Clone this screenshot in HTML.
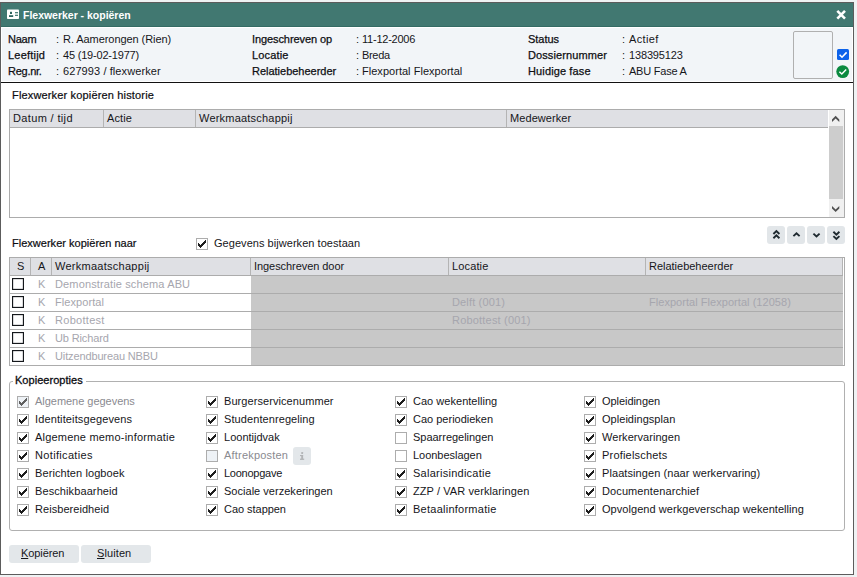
<!DOCTYPE html>
<html><head><meta charset="utf-8"><style>
html,body{margin:0;padding:0;}
body{width:857px;height:577px;position:relative;overflow:hidden;background:#eff2f3;font-family:"Liberation Sans", sans-serif;}
body>div,body>svg{position:absolute;}
.t{white-space:nowrap;}
u{text-decoration:underline;text-underline-offset:1px;}
</style></head><body>
<div style="left:0px;top:2px;width:854px;height:573px;border:1px solid #5c5c5c;box-sizing:border-box;background:#fff"></div>
<div style="left:1px;top:3px;width:852px;height:23px;background:#417871"></div>
<div style="left:1px;top:26px;width:852px;height:1px;background:#346b64"></div>
<svg style="position:absolute;left:7px;top:9px" width="13" height="11" viewBox="0 0 13 11"><rect x="0" y="0.6" width="12" height="9.5" rx="0.8" fill="#fff"/><rect x="3" y="2.8" width="2" height="2.2" fill="#2f665f"/><rect x="2" y="6.2" width="4.2" height="1.8" fill="#2f665f"/><rect x="8" y="3" width="3" height="1" fill="#4e827b"/><rect x="8" y="4" width="3" height="2" fill="#c5d6d3"/><rect x="8" y="6" width="3" height="1" fill="#4e827b"/></svg>
<div class="t" style="left:23px;top:9px;font-size:10.5px;line-height:12px;color:#fff;font-weight:bold;letter-spacing:-0.015px;">Flexwerker - kopiëren</div>
<svg style="position:absolute;left:835px;top:9px" width="13" height="12" viewBox="0 0 13 12"><path d="M2.3 1.9 L10.0 9.6 M10.0 1.9 L2.3 9.6" stroke="#fff" stroke-width="2.6" stroke-linecap="butt"/></svg>
<div style="left:1px;top:27px;width:852px;height:55px;background:#fff"></div>
<div style="left:2px;top:28px;width:850px;height:53px;background:#f2f5f8"></div>
<div style="left:1px;top:82px;width:852px;height:1px;background:#111"></div>
<div class="t" style="left:8px;top:33px;font-size:11px;line-height:13px;color:#0e0e12;-webkit-text-stroke:0.25px #0e0e12;letter-spacing:-0.233px;">Naam</div>
<div class="t" style="left:56px;top:33px;font-size:11px;line-height:13px;color:#16161a;">:</div>
<div class="t" style="left:63px;top:33px;font-size:11px;line-height:13px;color:#16161a;letter-spacing:-0.063px;">R. Aamerongen (Rien)</div>
<div class="t" style="left:8px;top:49px;font-size:11px;line-height:13px;color:#0e0e12;-webkit-text-stroke:0.25px #0e0e12;letter-spacing:0.214px;">Leeftijd</div>
<div class="t" style="left:56px;top:49px;font-size:11px;line-height:13px;color:#16161a;">:</div>
<div class="t" style="left:63px;top:49px;font-size:11px;line-height:13px;color:#16161a;letter-spacing:-0.193px;">45 (19-02-1977)</div>
<div class="t" style="left:8px;top:65px;font-size:11px;line-height:13px;color:#0e0e12;-webkit-text-stroke:0.25px #0e0e12;letter-spacing:-0.267px;">Reg.nr.</div>
<div class="t" style="left:56px;top:65px;font-size:11px;line-height:13px;color:#16161a;">:</div>
<div class="t" style="left:63px;top:65px;font-size:11px;line-height:13px;color:#16161a;letter-spacing:0.089px;">627993 / flexwerker</div>
<div class="t" style="left:252px;top:33px;font-size:11px;line-height:13px;color:#0e0e12;-webkit-text-stroke:0.25px #0e0e12;letter-spacing:-0.093px;">Ingeschreven op</div>
<div class="t" style="left:356px;top:33px;font-size:11px;line-height:13px;color:#16161a;">:</div>
<div class="t" style="left:362px;top:33px;font-size:11px;line-height:13px;color:#16161a;letter-spacing:-0.233px;">11-12-2006</div>
<div class="t" style="left:252px;top:49px;font-size:11px;line-height:13px;color:#0e0e12;-webkit-text-stroke:0.25px #0e0e12;letter-spacing:0.167px;">Locatie</div>
<div class="t" style="left:356px;top:49px;font-size:11px;line-height:13px;color:#16161a;">:</div>
<div class="t" style="left:362px;top:49px;font-size:11px;line-height:13px;color:#16161a;letter-spacing:-0.325px;">Breda</div>
<div class="t" style="left:252px;top:65px;font-size:11px;line-height:13px;color:#0e0e12;-webkit-text-stroke:0.25px #0e0e12;letter-spacing:-0.013px;">Relatiebeheerder</div>
<div class="t" style="left:356px;top:65px;font-size:11px;line-height:13px;color:#16161a;">:</div>
<div class="t" style="left:362px;top:65px;font-size:11px;line-height:13px;color:#16161a;letter-spacing:0.030px;">Flexportal Flexportal</div>
<div class="t" style="left:528px;top:33px;font-size:11px;line-height:13px;color:#0e0e12;-webkit-text-stroke:0.25px #0e0e12;letter-spacing:-0.020px;">Status</div>
<div class="t" style="left:622px;top:33px;font-size:11px;line-height:13px;color:#16161a;">:</div>
<div class="t" style="left:629px;top:33px;font-size:11px;line-height:13px;color:#16161a;letter-spacing:0.340px;">Actief</div>
<div class="t" style="left:528px;top:49px;font-size:11px;line-height:13px;color:#0e0e12;-webkit-text-stroke:0.25px #0e0e12;letter-spacing:0.100px;">Dossiernummer</div>
<div class="t" style="left:622px;top:49px;font-size:11px;line-height:13px;color:#16161a;">:</div>
<div class="t" style="left:629px;top:49px;font-size:11px;line-height:13px;color:#16161a;letter-spacing:-0.150px;">138395123</div>
<div class="t" style="left:528px;top:65px;font-size:11px;line-height:13px;color:#0e0e12;-webkit-text-stroke:0.25px #0e0e12;letter-spacing:0.127px;">Huidige fase</div>
<div class="t" style="left:622px;top:65px;font-size:11px;line-height:13px;color:#16161a;">:</div>
<div class="t" style="left:629px;top:65px;font-size:11px;line-height:13px;color:#16161a;letter-spacing:-0.222px;">ABU Fase A</div>
<div style="left:793px;top:31px;width:40px;height:48px;border:1px solid #b0b0b0;border-radius:2px;box-sizing:border-box"></div>
<svg style="position:absolute;left:837px;top:49px" width="12" height="12" viewBox="0 0 12 12"><rect x="0" y="0" width="12" height="11" rx="1.5" fill="#0c62ea"/><path d="M2.6 5.8 L5 8.2 L9.6 3.4" stroke="#fff" stroke-width="1.6" fill="none"/></svg>
<svg style="position:absolute;left:836px;top:65px" width="14" height="14" viewBox="0 0 14 14"><circle cx="6.7" cy="6.6" r="6.4" fill="#0b8a40"/><path d="M3.4 6.8 L5.8 9.1 L10.2 4.6" stroke="#fff" stroke-width="1.45" fill="none"/></svg>
<div class="t" style="left:12px;top:89px;font-size:11px;line-height:13px;color:#0c0c10;-webkit-text-stroke:0.2px #0c0c10;letter-spacing:0.159px;">Flexwerker kopiëren historie</div>
<div style="left:9px;top:109px;width:836px;height:109px;border:1px solid #acacac;box-sizing:border-box"></div>
<div style="left:10px;top:110px;width:818px;height:17px;background:#dfe0e4"></div>
<div style="left:10px;top:127px;width:818px;height:1px;background:#acacac"></div>
<div style="left:103px;top:110px;width:1px;height:17px;background:#b4b4b4"></div>
<div style="left:195px;top:110px;width:1px;height:17px;background:#b4b4b4"></div>
<div style="left:506px;top:110px;width:1px;height:17px;background:#b4b4b4"></div>
<div class="t" style="left:13px;top:112px;font-size:11px;line-height:13px;color:#16161a;letter-spacing:0.355px;">Datum / tijd</div>
<div class="t" style="left:107px;top:112px;font-size:11px;line-height:13px;color:#16161a;letter-spacing:0.125px;">Actie</div>
<div class="t" style="left:199px;top:112px;font-size:11px;line-height:13px;color:#16161a;letter-spacing:0.207px;">Werkmaatschappij</div>
<div class="t" style="left:510px;top:112px;font-size:11px;line-height:13px;color:#16161a;letter-spacing:0.078px;">Medewerker</div>
<div style="left:829px;top:110px;width:15px;height:107px;background:#f0f0f0"></div>
<div style="left:829px;top:126px;width:14px;height:73px;background:#cdcdcd"></div>
<svg style="position:absolute;left:829px;top:110px" width="15" height="17" viewBox="0 0 15 17"><path d="M3 9.5 L6.65 5.8 L10.3 9.5 L10.3 12 L6.65 8.4 L3 12 Z" fill="#505050"/></svg>
<svg style="position:absolute;left:829px;top:199px" width="15" height="18" viewBox="0 0 15 18"><path d="M3 6.9 L6.65 10.5 L10.3 6.9 L10.3 9.4 L6.65 13 L3 9.4 Z" fill="#505050"/></svg>
<div class="t" style="left:12px;top:237px;font-size:11px;line-height:13px;color:#0c0c10;-webkit-text-stroke:0.2px #0c0c10;letter-spacing:0.017px;">Flexwerker kopiëren naar</div>
<svg style="position:absolute;left:196px;top:238px" width="12" height="12" viewBox="0 0 12 12"><rect x="0.5" y="0.5" width="11" height="11" fill="#fff" stroke="#adadad" stroke-width="1"/><path d="M2 4.8 L4.5 7.3 L10 1.8 L10 4.7 L4.5 10.2 L2 7.7 Z" fill="#1e1e1e" shape-rendering="crispEdges"/></svg>
<div class="t" style="left:214px;top:237px;font-size:11px;line-height:13px;color:#16161a;letter-spacing:0.046px;">Gegevens bijwerken toestaan</div>
<svg style="position:absolute;left:767px;top:226px" width="18" height="18" viewBox="0 0 18 18"><rect x="0" y="0" width="18" height="18" rx="3" fill="#e2e6e9"/><path d="M6.4 8 L9.4 5.1 L12.4 8 M6.4 12.3 L9.4 9.4 L12.4 12.3" stroke="#1f2a30" stroke-width="1.9" fill="none"/></svg>
<svg style="position:absolute;left:787px;top:226px" width="18" height="18" viewBox="0 0 18 18"><rect x="0" y="0" width="18" height="18" rx="3" fill="#e2e6e9"/><path d="M6.4 10.1 L9.5 7.2 L12.6 10.1" stroke="#1f2a30" stroke-width="1.9" fill="none"/></svg>
<svg style="position:absolute;left:807px;top:226px" width="18" height="18" viewBox="0 0 18 18"><rect x="0" y="0" width="18" height="18" rx="3" fill="#e2e6e9"/><path d="M6.4 7.6 L9.5 10.5 L12.6 7.6" stroke="#1f2a30" stroke-width="1.9" fill="none"/></svg>
<svg style="position:absolute;left:827px;top:226px" width="18" height="18" viewBox="0 0 18 18"><rect x="0" y="0" width="18" height="18" rx="3" fill="#e2e6e9"/><path d="M6.4 5.8 L9.4 8.7 L12.4 5.8 M6.4 10.1 L9.4 13 L12.4 10.1" stroke="#1f2a30" stroke-width="1.9" fill="none"/></svg>
<div style="left:9px;top:257px;width:836px;height:109px;border:1px solid #acacac;box-sizing:border-box"></div>
<div style="left:10px;top:258px;width:832px;height:17px;background:#dfe0e4"></div>
<div style="left:10px;top:275px;width:833px;height:1px;background:#acacac"></div>
<div style="left:10px;top:293px;width:833px;height:1px;background:#acacac"></div>
<div style="left:10px;top:311px;width:833px;height:1px;background:#acacac"></div>
<div style="left:10px;top:329px;width:833px;height:1px;background:#acacac"></div>
<div style="left:10px;top:347px;width:833px;height:1px;background:#acacac"></div>
<div style="left:30px;top:258px;width:1px;height:17px;background:#b4b4b4"></div>
<div style="left:51px;top:258px;width:1px;height:17px;background:#b4b4b4"></div>
<div style="left:250px;top:258px;width:1px;height:17px;background:#b4b4b4"></div>
<div style="left:448px;top:258px;width:1px;height:17px;background:#b4b4b4"></div>
<div style="left:645px;top:258px;width:1px;height:17px;background:#b4b4b4"></div>
<div style="left:842px;top:258px;width:1px;height:17px;background:#b4b4b4"></div>
<div style="left:251px;top:276px;width:592px;height:17px;background:#c8c8c8"></div>
<div style="left:251px;top:294px;width:592px;height:17px;background:#c8c8c8"></div>
<div style="left:251px;top:312px;width:592px;height:17px;background:#c8c8c8"></div>
<div style="left:251px;top:330px;width:592px;height:17px;background:#c8c8c8"></div>
<div style="left:251px;top:348px;width:592px;height:17px;background:#c8c8c8"></div>
<div class="t" style="left:17px;top:260px;font-size:11px;line-height:13px;color:#16161a;">S</div>
<div class="t" style="left:38px;top:260px;font-size:11px;line-height:13px;color:#16161a;">A</div>
<div class="t" style="left:55px;top:260px;font-size:11px;line-height:13px;color:#16161a;letter-spacing:0.267px;">Werkmaatschappij</div>
<div class="t" style="left:254px;top:260px;font-size:11px;line-height:13px;color:#16161a;letter-spacing:-0.062px;">Ingeschreven door</div>
<div class="t" style="left:452px;top:260px;font-size:11px;line-height:13px;color:#16161a;letter-spacing:0.133px;">Locatie</div>
<div class="t" style="left:649px;top:260px;font-size:11px;line-height:13px;color:#16161a;letter-spacing:-0.013px;">Relatiebeheerder</div>
<svg style="position:absolute;left:12px;top:278px" width="12" height="12" viewBox="0 0 12 12"><rect x="0.575" y="0.575" width="10.85" height="10.85" fill="#fff" stroke="#15181c" stroke-width="1.15"/></svg>
<div class="t" style="left:38px;top:278px;font-size:11px;line-height:13px;color:#a6a6ae;">K</div>
<div class="t" style="left:55px;top:278px;font-size:11px;line-height:13px;color:#a6a6ae;letter-spacing:0.136px;">Demonstratie schema ABU</div>
<svg style="position:absolute;left:12px;top:296px" width="12" height="12" viewBox="0 0 12 12"><rect x="0.575" y="0.575" width="10.85" height="10.85" fill="#fff" stroke="#15181c" stroke-width="1.15"/></svg>
<div class="t" style="left:38px;top:296px;font-size:11px;line-height:13px;color:#a6a6ae;">K</div>
<div class="t" style="left:55px;top:296px;font-size:11px;line-height:13px;color:#a6a6ae;letter-spacing:0.067px;">Flexportal</div>
<svg style="position:absolute;left:12px;top:314px" width="12" height="12" viewBox="0 0 12 12"><rect x="0.575" y="0.575" width="10.85" height="10.85" fill="#fff" stroke="#15181c" stroke-width="1.15"/></svg>
<div class="t" style="left:38px;top:314px;font-size:11px;line-height:13px;color:#a6a6ae;">K</div>
<div class="t" style="left:55px;top:314px;font-size:11px;line-height:13px;color:#a6a6ae;letter-spacing:0.287px;">Robottest</div>
<svg style="position:absolute;left:12px;top:332px" width="12" height="12" viewBox="0 0 12 12"><rect x="0.575" y="0.575" width="10.85" height="10.85" fill="#fff" stroke="#15181c" stroke-width="1.15"/></svg>
<div class="t" style="left:38px;top:332px;font-size:11px;line-height:13px;color:#a6a6ae;">K</div>
<div class="t" style="left:55px;top:332px;font-size:11px;line-height:13px;color:#a6a6ae;letter-spacing:-0.133px;">Ub Richard</div>
<svg style="position:absolute;left:12px;top:350px" width="12" height="12" viewBox="0 0 12 12"><rect x="0.575" y="0.575" width="10.85" height="10.85" fill="#fff" stroke="#15181c" stroke-width="1.15"/></svg>
<div class="t" style="left:38px;top:350px;font-size:11px;line-height:13px;color:#a6a6ae;">K</div>
<div class="t" style="left:55px;top:350px;font-size:11px;line-height:13px;color:#a6a6ae;letter-spacing:-0.129px;">Uitzendbureau NBBU</div>
<div class="t" style="left:452px;top:296px;font-size:11px;line-height:13px;color:#a6a6ae;letter-spacing:0.150px;">Delft (001)</div>
<div class="t" style="left:649px;top:296px;font-size:11px;line-height:13px;color:#a6a6ae;letter-spacing:0.043px;">Flexportal Flexportal (12058)</div>
<div class="t" style="left:452px;top:314px;font-size:11px;line-height:13px;color:#a6a6ae;letter-spacing:0.193px;">Robottest (001)</div>
<div style="left:9px;top:381px;width:836px;height:150px;border:1px solid #b0b0b0;border-radius:3px;box-sizing:border-box"></div>
<div style="left:13px;top:376px;width:73px;height:8px;background:#fff"></div>
<div class="t" style="left:15px;top:374px;font-size:11px;line-height:13px;color:#0c0c10;-webkit-text-stroke:0.3px #0c0c10;letter-spacing:0.033px;">Kopieeropties</div>
<svg style="position:absolute;left:17px;top:396px" width="12" height="12" viewBox="0 0 12 12"><rect x="0.5" y="0.5" width="11" height="11" fill="#eef2f6" stroke="#adadad" stroke-width="1"/><path d="M2 4.8 L4.5 7.3 L10 1.8 L10 4.7 L4.5 10.2 L2 7.7 Z" fill="#606060" shape-rendering="crispEdges"/></svg>
<div class="t" style="left:35px;top:395px;font-size:11px;line-height:13px;color:#8a8a90;letter-spacing:-0.031px;">Algemene gegevens</div>
<svg style="position:absolute;left:17px;top:414px" width="12" height="12" viewBox="0 0 12 12"><rect x="0.5" y="0.5" width="11" height="11" fill="#fff" stroke="#adadad" stroke-width="1"/><path d="M2 4.8 L4.5 7.3 L10 1.8 L10 4.7 L4.5 10.2 L2 7.7 Z" fill="#1e1e1e" shape-rendering="crispEdges"/></svg>
<div class="t" style="left:35px;top:413px;font-size:11px;line-height:13px;color:#16161a;letter-spacing:0.128px;">Identiteitsgegevens</div>
<svg style="position:absolute;left:17px;top:432px" width="12" height="12" viewBox="0 0 12 12"><rect x="0.5" y="0.5" width="11" height="11" fill="#fff" stroke="#adadad" stroke-width="1"/><path d="M2 4.8 L4.5 7.3 L10 1.8 L10 4.7 L4.5 10.2 L2 7.7 Z" fill="#1e1e1e" shape-rendering="crispEdges"/></svg>
<div class="t" style="left:35px;top:431px;font-size:11px;line-height:13px;color:#16161a;letter-spacing:0.204px;">Algemene memo-informatie</div>
<svg style="position:absolute;left:17px;top:450px" width="12" height="12" viewBox="0 0 12 12"><rect x="0.5" y="0.5" width="11" height="11" fill="#fff" stroke="#adadad" stroke-width="1"/><path d="M2 4.8 L4.5 7.3 L10 1.8 L10 4.7 L4.5 10.2 L2 7.7 Z" fill="#1e1e1e" shape-rendering="crispEdges"/></svg>
<div class="t" style="left:35px;top:449px;font-size:11px;line-height:13px;color:#16161a;letter-spacing:0.336px;">Notificaties</div>
<svg style="position:absolute;left:17px;top:468px" width="12" height="12" viewBox="0 0 12 12"><rect x="0.5" y="0.5" width="11" height="11" fill="#fff" stroke="#adadad" stroke-width="1"/><path d="M2 4.8 L4.5 7.3 L10 1.8 L10 4.7 L4.5 10.2 L2 7.7 Z" fill="#1e1e1e" shape-rendering="crispEdges"/></svg>
<div class="t" style="left:35px;top:467px;font-size:11px;line-height:13px;color:#16161a;letter-spacing:0.088px;">Berichten logboek</div>
<svg style="position:absolute;left:17px;top:486px" width="12" height="12" viewBox="0 0 12 12"><rect x="0.5" y="0.5" width="11" height="11" fill="#fff" stroke="#adadad" stroke-width="1"/><path d="M2 4.8 L4.5 7.3 L10 1.8 L10 4.7 L4.5 10.2 L2 7.7 Z" fill="#1e1e1e" shape-rendering="crispEdges"/></svg>
<div class="t" style="left:35px;top:485px;font-size:11px;line-height:13px;color:#16161a;letter-spacing:0.100px;">Beschikbaarheid</div>
<svg style="position:absolute;left:17px;top:504px" width="12" height="12" viewBox="0 0 12 12"><rect x="0.5" y="0.5" width="11" height="11" fill="#fff" stroke="#adadad" stroke-width="1"/><path d="M2 4.8 L4.5 7.3 L10 1.8 L10 4.7 L4.5 10.2 L2 7.7 Z" fill="#1e1e1e" shape-rendering="crispEdges"/></svg>
<div class="t" style="left:35px;top:503px;font-size:11px;line-height:13px;color:#16161a;letter-spacing:0.054px;">Reisbereidheid</div>
<svg style="position:absolute;left:206px;top:396px" width="12" height="12" viewBox="0 0 12 12"><rect x="0.5" y="0.5" width="11" height="11" fill="#fff" stroke="#adadad" stroke-width="1"/><path d="M2 4.8 L4.5 7.3 L10 1.8 L10 4.7 L4.5 10.2 L2 7.7 Z" fill="#1e1e1e" shape-rendering="crispEdges"/></svg>
<div class="t" style="left:224px;top:395px;font-size:11px;line-height:13px;color:#16161a;letter-spacing:0.072px;">Burgerservicenummer</div>
<svg style="position:absolute;left:206px;top:414px" width="12" height="12" viewBox="0 0 12 12"><rect x="0.5" y="0.5" width="11" height="11" fill="#fff" stroke="#adadad" stroke-width="1"/><path d="M2 4.8 L4.5 7.3 L10 1.8 L10 4.7 L4.5 10.2 L2 7.7 Z" fill="#1e1e1e" shape-rendering="crispEdges"/></svg>
<div class="t" style="left:224px;top:413px;font-size:11px;line-height:13px;color:#16161a;letter-spacing:0.087px;">Studentenregeling</div>
<svg style="position:absolute;left:206px;top:432px" width="12" height="12" viewBox="0 0 12 12"><rect x="0.5" y="0.5" width="11" height="11" fill="#fff" stroke="#adadad" stroke-width="1"/><path d="M2 4.8 L4.5 7.3 L10 1.8 L10 4.7 L4.5 10.2 L2 7.7 Z" fill="#1e1e1e" shape-rendering="crispEdges"/></svg>
<div class="t" style="left:224px;top:431px;font-size:11px;line-height:13px;color:#16161a;letter-spacing:0.010px;">Loontijdvak</div>
<svg style="position:absolute;left:206px;top:450px" width="12" height="12" viewBox="0 0 12 12"><rect x="0.5" y="0.5" width="11" height="11" fill="#eef2f6" stroke="#adadad" stroke-width="1"/></svg>
<div class="t" style="left:224px;top:449px;font-size:11px;line-height:13px;color:#8a8a90;letter-spacing:0.200px;">Aftrekposten</div>
<div style="left:293px;top:447px;width:18px;height:18px;border-radius:3px;background:#e3e7ea"></div>
<svg style="position:absolute;left:293px;top:447px" width="18" height="18" viewBox="0 0 18 18"><rect x="8.2" y="5" width="1.9" height="1.9" rx="0.4" fill="#b2b4b6"/><rect x="7" y="8" width="3.1" height="1.1" fill="#b2b4b6"/><rect x="8.2" y="8" width="1.9" height="4.6" fill="#b2b4b6"/><rect x="7" y="11.6" width="4.2" height="1.3" fill="#b2b4b6"/></svg>
<svg style="position:absolute;left:206px;top:468px" width="12" height="12" viewBox="0 0 12 12"><rect x="0.5" y="0.5" width="11" height="11" fill="#fff" stroke="#adadad" stroke-width="1"/><path d="M2 4.8 L4.5 7.3 L10 1.8 L10 4.7 L4.5 10.2 L2 7.7 Z" fill="#1e1e1e" shape-rendering="crispEdges"/></svg>
<div class="t" style="left:224px;top:467px;font-size:11px;line-height:13px;color:#16161a;letter-spacing:-0.256px;">Loonopgave</div>
<svg style="position:absolute;left:206px;top:486px" width="12" height="12" viewBox="0 0 12 12"><rect x="0.5" y="0.5" width="11" height="11" fill="#fff" stroke="#adadad" stroke-width="1"/><path d="M2 4.8 L4.5 7.3 L10 1.8 L10 4.7 L4.5 10.2 L2 7.7 Z" fill="#1e1e1e" shape-rendering="crispEdges"/></svg>
<div class="t" style="left:224px;top:485px;font-size:11px;line-height:13px;color:#16161a;letter-spacing:0.025px;">Sociale verzekeringen</div>
<svg style="position:absolute;left:206px;top:504px" width="12" height="12" viewBox="0 0 12 12"><rect x="0.5" y="0.5" width="11" height="11" fill="#fff" stroke="#adadad" stroke-width="1"/><path d="M2 4.8 L4.5 7.3 L10 1.8 L10 4.7 L4.5 10.2 L2 7.7 Z" fill="#1e1e1e" shape-rendering="crispEdges"/></svg>
<div class="t" style="left:224px;top:503px;font-size:11px;line-height:13px;color:#16161a;letter-spacing:-0.040px;">Cao stappen</div>
<svg style="position:absolute;left:395px;top:396px" width="12" height="12" viewBox="0 0 12 12"><rect x="0.5" y="0.5" width="11" height="11" fill="#fff" stroke="#adadad" stroke-width="1"/><path d="M2 4.8 L4.5 7.3 L10 1.8 L10 4.7 L4.5 10.2 L2 7.7 Z" fill="#1e1e1e" shape-rendering="crispEdges"/></svg>
<div class="t" style="left:413px;top:395px;font-size:11px;line-height:13px;color:#16161a;letter-spacing:0.027px;">Cao wekentelling</div>
<svg style="position:absolute;left:395px;top:414px" width="12" height="12" viewBox="0 0 12 12"><rect x="0.5" y="0.5" width="11" height="11" fill="#fff" stroke="#adadad" stroke-width="1"/><path d="M2 4.8 L4.5 7.3 L10 1.8 L10 4.7 L4.5 10.2 L2 7.7 Z" fill="#1e1e1e" shape-rendering="crispEdges"/></svg>
<div class="t" style="left:413px;top:413px;font-size:11px;line-height:13px;color:#16161a;letter-spacing:0.000px;">Cao periodieken</div>
<svg style="position:absolute;left:395px;top:432px" width="12" height="12" viewBox="0 0 12 12"><rect x="0.5" y="0.5" width="11" height="11" fill="#fff" stroke="#adadad" stroke-width="1"/></svg>
<div class="t" style="left:413px;top:431px;font-size:11px;line-height:13px;color:#16161a;letter-spacing:-0.021px;">Spaarregelingen</div>
<svg style="position:absolute;left:395px;top:450px" width="12" height="12" viewBox="0 0 12 12"><rect x="0.5" y="0.5" width="11" height="11" fill="#fff" stroke="#adadad" stroke-width="1"/></svg>
<div class="t" style="left:413px;top:449px;font-size:11px;line-height:13px;color:#16161a;letter-spacing:-0.027px;">Loonbeslagen</div>
<svg style="position:absolute;left:395px;top:468px" width="12" height="12" viewBox="0 0 12 12"><rect x="0.5" y="0.5" width="11" height="11" fill="#fff" stroke="#adadad" stroke-width="1"/><path d="M2 4.8 L4.5 7.3 L10 1.8 L10 4.7 L4.5 10.2 L2 7.7 Z" fill="#1e1e1e" shape-rendering="crispEdges"/></svg>
<div class="t" style="left:413px;top:467px;font-size:11px;line-height:13px;color:#16161a;letter-spacing:0.260px;">Salarisindicatie</div>
<svg style="position:absolute;left:395px;top:486px" width="12" height="12" viewBox="0 0 12 12"><rect x="0.5" y="0.5" width="11" height="11" fill="#fff" stroke="#adadad" stroke-width="1"/><path d="M2 4.8 L4.5 7.3 L10 1.8 L10 4.7 L4.5 10.2 L2 7.7 Z" fill="#1e1e1e" shape-rendering="crispEdges"/></svg>
<div class="t" style="left:413px;top:485px;font-size:11px;line-height:13px;color:#16161a;letter-spacing:0.086px;">ZZP / VAR verklaringen</div>
<svg style="position:absolute;left:395px;top:504px" width="12" height="12" viewBox="0 0 12 12"><rect x="0.5" y="0.5" width="11" height="11" fill="#fff" stroke="#adadad" stroke-width="1"/><path d="M2 4.8 L4.5 7.3 L10 1.8 L10 4.7 L4.5 10.2 L2 7.7 Z" fill="#1e1e1e" shape-rendering="crispEdges"/></svg>
<div class="t" style="left:413px;top:503px;font-size:11px;line-height:13px;color:#16161a;letter-spacing:0.253px;">Betaalinformatie</div>
<svg style="position:absolute;left:584px;top:396px" width="12" height="12" viewBox="0 0 12 12"><rect x="0.5" y="0.5" width="11" height="11" fill="#fff" stroke="#adadad" stroke-width="1"/><path d="M2 4.8 L4.5 7.3 L10 1.8 L10 4.7 L4.5 10.2 L2 7.7 Z" fill="#1e1e1e" shape-rendering="crispEdges"/></svg>
<div class="t" style="left:602px;top:395px;font-size:11px;line-height:13px;color:#16161a;letter-spacing:-0.060px;">Opleidingen</div>
<svg style="position:absolute;left:584px;top:414px" width="12" height="12" viewBox="0 0 12 12"><rect x="0.5" y="0.5" width="11" height="11" fill="#fff" stroke="#adadad" stroke-width="1"/><path d="M2 4.8 L4.5 7.3 L10 1.8 L10 4.7 L4.5 10.2 L2 7.7 Z" fill="#1e1e1e" shape-rendering="crispEdges"/></svg>
<div class="t" style="left:602px;top:413px;font-size:11px;line-height:13px;color:#16161a;letter-spacing:0.038px;">Opleidingsplan</div>
<svg style="position:absolute;left:584px;top:432px" width="12" height="12" viewBox="0 0 12 12"><rect x="0.5" y="0.5" width="11" height="11" fill="#fff" stroke="#adadad" stroke-width="1"/><path d="M2 4.8 L4.5 7.3 L10 1.8 L10 4.7 L4.5 10.2 L2 7.7 Z" fill="#1e1e1e" shape-rendering="crispEdges"/></svg>
<div class="t" style="left:602px;top:431px;font-size:11px;line-height:13px;color:#16161a;letter-spacing:0.046px;">Werkervaringen</div>
<svg style="position:absolute;left:584px;top:450px" width="12" height="12" viewBox="0 0 12 12"><rect x="0.5" y="0.5" width="11" height="11" fill="#fff" stroke="#adadad" stroke-width="1"/><path d="M2 4.8 L4.5 7.3 L10 1.8 L10 4.7 L4.5 10.2 L2 7.7 Z" fill="#1e1e1e" shape-rendering="crispEdges"/></svg>
<div class="t" style="left:602px;top:449px;font-size:11px;line-height:13px;color:#16161a;letter-spacing:0.192px;">Profielschets</div>
<svg style="position:absolute;left:584px;top:468px" width="12" height="12" viewBox="0 0 12 12"><rect x="0.5" y="0.5" width="11" height="11" fill="#fff" stroke="#adadad" stroke-width="1"/><path d="M2 4.8 L4.5 7.3 L10 1.8 L10 4.7 L4.5 10.2 L2 7.7 Z" fill="#1e1e1e" shape-rendering="crispEdges"/></svg>
<div class="t" style="left:602px;top:467px;font-size:11px;line-height:13px;color:#16161a;letter-spacing:0.077px;">Plaatsingen (naar werkervaring)</div>
<svg style="position:absolute;left:584px;top:486px" width="12" height="12" viewBox="0 0 12 12"><rect x="0.5" y="0.5" width="11" height="11" fill="#fff" stroke="#adadad" stroke-width="1"/><path d="M2 4.8 L4.5 7.3 L10 1.8 L10 4.7 L4.5 10.2 L2 7.7 Z" fill="#1e1e1e" shape-rendering="crispEdges"/></svg>
<div class="t" style="left:602px;top:485px;font-size:11px;line-height:13px;color:#16161a;letter-spacing:0.106px;">Documentenarchief</div>
<svg style="position:absolute;left:584px;top:504px" width="12" height="12" viewBox="0 0 12 12"><rect x="0.5" y="0.5" width="11" height="11" fill="#fff" stroke="#adadad" stroke-width="1"/><path d="M2 4.8 L4.5 7.3 L10 1.8 L10 4.7 L4.5 10.2 L2 7.7 Z" fill="#1e1e1e" shape-rendering="crispEdges"/></svg>
<div class="t" style="left:602px;top:503px;font-size:11px;line-height:13px;color:#16161a;letter-spacing:0.053px;">Opvolgend werkgeverschap wekentelling</div>
<div style="left:9px;top:545px;width:70px;height:18px;border-radius:3px;background:#e3e7ea"></div>
<div style="left:81px;top:545px;width:70px;height:18px;border-radius:3px;background:#e3e7ea"></div>
<div class="t" style="left:21px;top:547px;font-size:11px;line-height:13px;color:#16161a;letter-spacing:-0.086px;"><u>K</u>opiëren</div>
<div class="t" style="left:97px;top:547px;font-size:11px;line-height:13px;color:#16161a;letter-spacing:0.100px;"><u>S</u>luiten</div>
</body></html>
